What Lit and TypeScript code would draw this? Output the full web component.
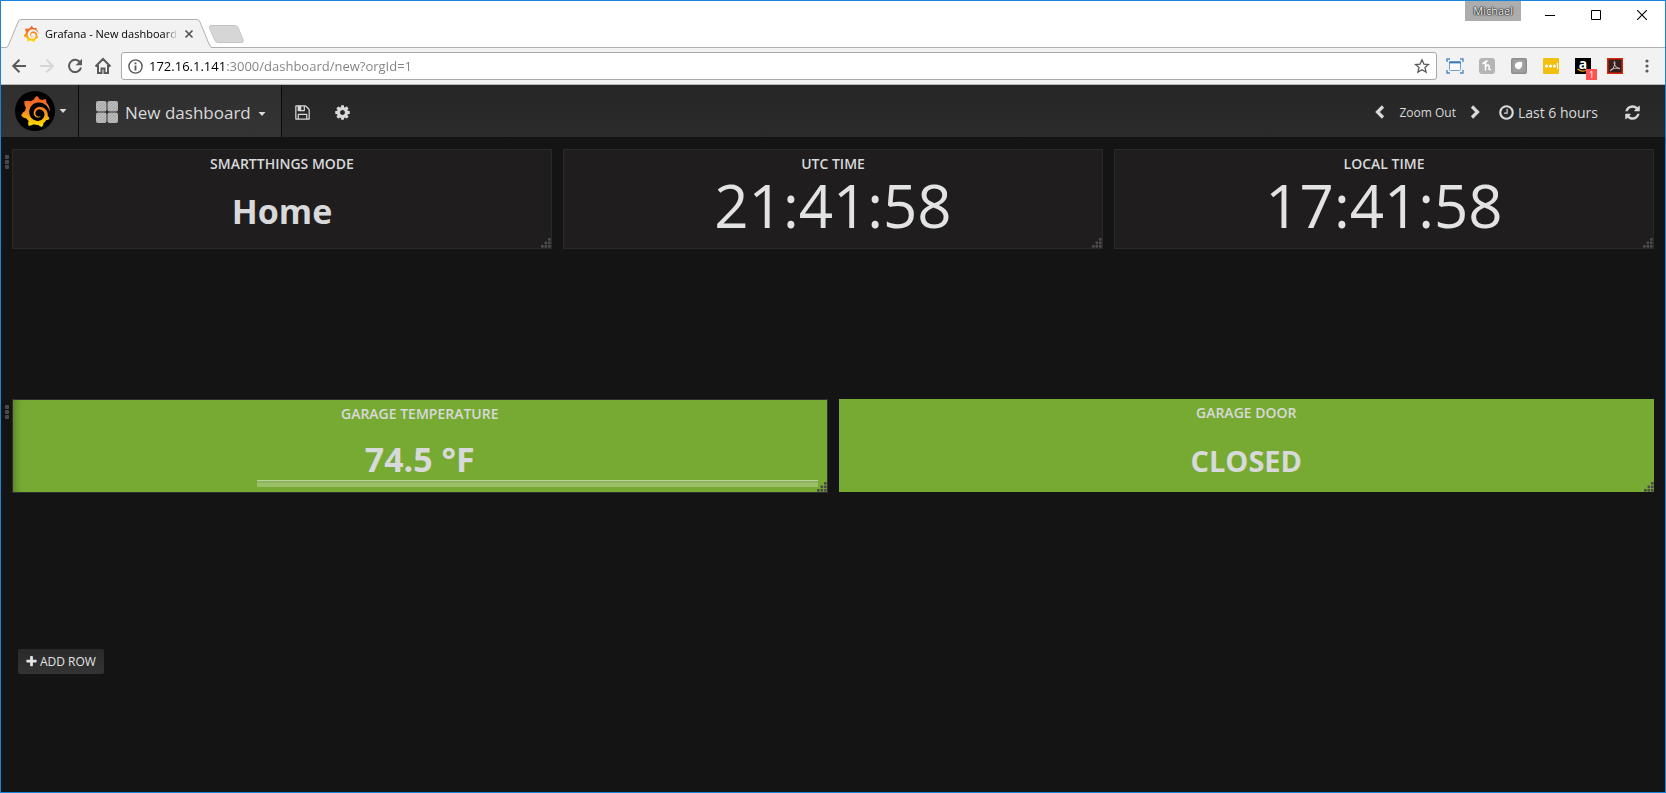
import { LitElement, html, svg, css, nothing } from "lit";
import { customElement, property } from "lit/decorators.js";
import { classMap } from "lit/directives/class-map.js";

const GRAFANA =
  "M23.02 10.59a8.578 8.578 0 0 0-.862-3.034 8.911 8.911 0 0 0-1.789-2.445c.337-1.342-.413-2.505-.413-2.505-1.292-.08-2.113.4-2.416.62-.052-.02-.102-.044-.154-.064-.22-.089-.446-.172-.677-.247-.231-.073-.47-.14-.711-.197a9.867 9.867 0 0 0-.875-.161C14.557.753 12.94 0 12.94 0c-1.804 1.145-2.147 2.744-2.147 2.744l-.018.093c-.098.029-.2.057-.298.088-.138.042-.275.094-.413.143-.138.055-.275.107-.41.166a8.869 8.869 0 0 0-1.557.87l-.063-.029c-2.497-.955-4.716.195-4.716.195-.203 2.658.996 4.33 1.235 4.636a11.608 11.608 0 0 0-.607 2.635C1.636 12.677.953 15.014.953 15.014c1.926 2.214 4.171 2.351 4.171 2.351.003-.002.006-.002.006-.005.285.509.615.994.986 1.446.156.19.32.371.488.548-.704 2.009.099 3.68.099 3.68 2.144.08 3.553-.937 3.849-1.173a9.784 9.784 0 0 0 3.164.501h.08l.055-.003.107-.002.103-.005.003.002c1.01 1.44 2.788 1.646 2.788 1.646 1.264-1.332 1.337-2.653 1.337-2.94v-.058c0-.02-.003-.039-.003-.06.265-.187.52-.387.758-.6a7.875 7.875 0 0 0 1.415-1.7c1.43.083 2.437-.885 2.437-.885-.236-1.49-1.085-2.216-1.264-2.354l-.018-.013-.016-.013a.217.217 0 0 1-.031-.02c.008-.092.016-.18.02-.27.011-.162.016-.323.016-.48v-.253l-.005-.098-.008-.135a1.891 1.891 0 0 0-.01-.13c-.003-.042-.008-.083-.013-.125l-.016-.124-.018-.122a6.215 6.215 0 0 0-2.032-3.73 6.015 6.015 0 0 0-3.222-1.46 6.292 6.292 0 0 0-.85-.048l-.107.002h-.063l-.044.003-.104.008a4.777 4.777 0 0 0-3.335 1.695c-.332.4-.592.84-.768 1.297a4.594 4.594 0 0 0-.312 1.817l.003.091c.005.055.007.11.013.164a3.615 3.615 0 0 0 .698 1.82 3.53 3.53 0 0 0 1.827 1.282c.33.098.66.14.971.137.039 0 .078 0 .114-.002l.063-.003c.02 0 .041-.003.062-.003.034-.002.065-.007.099-.01.007 0 .018-.003.028-.003l.031-.005.06-.008a1.18 1.18 0 0 0 .112-.02c.036-.008.072-.013.109-.024a2.634 2.634 0 0 0 .914-.415c.028-.02.056-.041.085-.065a.248.248 0 0 0 .039-.35.244.244 0 0 0-.309-.06l-.078.042c-.09.044-.184.083-.283.116a2.476 2.476 0 0 1-.475.096c-.028.003-.054.006-.083.006l-.083.002c-.026 0-.054 0-.08-.002l-.102-.006h-.012l-.024.006c-.016-.003-.031-.003-.044-.006-.031-.002-.06-.007-.091-.01a2.59 2.59 0 0 1-.724-.213 2.557 2.557 0 0 1-.667-.438 2.52 2.52 0 0 1-.805-1.475 2.306 2.306 0 0 1-.029-.444l.006-.122v-.023l.002-.031c.003-.021.003-.04.005-.06a3.163 3.163 0 0 1 1.352-2.29 3.12 3.12 0 0 1 .937-.43 2.946 2.946 0 0 1 .776-.101h.06l.07.002.045.003h.026l.07.005a4.041 4.041 0 0 1 1.635.49 3.94 3.94 0 0 1 1.602 1.662 3.77 3.77 0 0 1 .397 1.414l.005.076.003.075c.002.026.002.05.002.075 0 .024.003.052 0 .07v.065l-.002.073-.008.174a6.195 6.195 0 0 1-.08.639 5.1 5.1 0 0 1-.267.927 5.31 5.31 0 0 1-.624 1.13 5.052 5.052 0 0 1-3.237 2.014 4.82 4.82 0 0 1-.649.066l-.039.003h-.287a6.607 6.607 0 0 1-1.716-.265 6.776 6.776 0 0 1-3.4-2.274 6.75 6.75 0 0 1-.746-1.15 6.616 6.616 0 0 1-.714-2.596l-.005-.083-.002-.02v-.056l-.003-.073v-.096l-.003-.104v-.07l.003-.163c.008-.22.026-.45.054-.678a8.707 8.707 0 0 1 .28-1.355c.128-.444.286-.872.473-1.277a7.04 7.04 0 0 1 1.456-2.1 5.925 5.925 0 0 1 .953-.763c.169-.111.343-.213.524-.306.089-.05.182-.091.273-.135.047-.02.093-.042.138-.062a7.177 7.177 0 0 1 .714-.267l.145-.045c.049-.015.098-.026.148-.041.098-.029.197-.052.296-.076.049-.013.1-.02.15-.033l.15-.032.151-.028.076-.013.075-.01.153-.024c.057-.01.114-.013.171-.023l.169-.021c.036-.003.073-.008.106-.01l.073-.008.036-.003.042-.002c.057-.003.114-.008.171-.01l.086-.006h.023l.037-.003.145-.007a7.999 7.999 0 0 1 1.708.125 7.917 7.917 0 0 1 2.048.68 8.253 8.253 0 0 1 1.672 1.09l.09.077.089.078c.06.052.114.107.171.159.057.052.112.106.166.16.052.055.107.107.159.164a8.671 8.671 0 0 1 1.41 1.978c.012.026.028.052.04.078l.04.078.075.156c.023.051.05.1.07.153l.065.15a8.848 8.848 0 0 1 .45 1.34.19.19 0 0 0 .201.142.186.186 0 0 0 .172-.184c.01-.246.002-.532-.024-.856z";

const COG =
  "M1152 896q0-106-75-181t-181-75-181 75-75 181 75 181 181 75 181-75 75-181zm512-109v222q0 12-8 23t-20 13l-185 28q-19 54-39 91 35 50 107 138 10 12 10 25t-9 23q-27 37-99 108t-94 71q-12 0-26-9l-138-108q-44 23-91 38-16 136-29 186-7 28-36 28h-222q-14 0-24.5-8.5t-11.5-21.5l-28-184q-49-16-90-37l-141 107q-10 9-25 9-14 0-25-11-126-114-165-168-7-10-7-23 0-12 8-23 15-21 51-66.5t54-70.5q-27-50-41-99l-183-27q-13-2-21-12.5t-8-23.5v-222q0-12 8-23t19-13l186-28q14-46 39-92-40-57-107-138-10-12-10-24 0-10 9-23 26-36 98.5-107.5t94.5-71.5q13 0 26 10l138 107q44-23 91-38 16-136 29-186 7-28 36-28h222q14 0 24.5 8.5t11.5 21.5l28 184q49 16 90 37l142-107q9-9 24-9 13 0 25 10 129 119 165 170 7 8 7 22 0 12-8 23-15 21-51 66.5t-54 70.5q26 50 41 98l183 28q13 2 21 12.5t8 23.5z";
const FLOPPY =
  "M512 1536h768v-384h-768v384zm896 0h128v-896q0-14-10-38.5t-20-34.5l-281-281q-10-10-34-20t-39-10v416q0 40-28 68t-68 28h-576q-40 0-68-28t-28-68v-416h-128v1280h128v-416q0-40 28-68t68-28h832q40 0 68 28t28 68v416zm-384-928v-320q0-13-9.5-22.5t-22.5-9.5h-192q-13 0-22.5 9.5t-9.5 22.5v320q0 13 9.5 22.5t22.5 9.5h192q13 0 22.5-9.5t9.5-22.5zm640 32v928q0 40-28 68t-68 28h-1344q-40 0-68-28t-28-68v-1344q0-40 28-68t68-28h928q40 0 88 20t76 48l280 280q28 28 48 76t20 88z";
const CLOCK =
  "M1024 544v448q0 14-9 23t-23 9h-320q-14 0-23-9t-9-23v-64q0-14 9-23t23-9h224v-352q0-14 9-23t23-9h64q14 0 23 9t9 23zm416 352q0-148-73-273t-198-198-273-73-273 73-198 198-73 273 73 273 198 198 273 73 273-73 198-198 73-273zm224 0q0 209-103 385.5t-279.5 279.5-385.5 103-385.5-103-279.5-279.5-103-385.5 103-385.5 279.5-279.5 385.5-103 385.5 103 279.5 279.5 103 385.5z";
const REFRESH =
  "M1639 1056q0 5-1 7-64 268-268 434.5t-478 166.5q-146 0-282.5-55t-243.5-157l-129 129q-19 19-45 19t-45-19-19-45v-448q0-26 19-45t45-19h448q26 0 45 19t19 45-19 45l-137 137q71 66 161 102t187 36q134 0 250-65t186-179q11-17 53-117 8-23 30-23h192q13 0 22.5 9.5t9.5 22.5zm25-800v448q0 26-19 45t-45 19h-448q-26 0-45-19t-19-45 19-45l138-138q-148-137-349-137-134 0-250 65t-186 179q-11 17-53 117-8 23-30 23h-199q-13 0-22.5-9.5t-9.5-22.5v-7q65-268 270-434.5t480-166.5q146 0 284 55.5t245 156.5l130-129q19-19 45-19t45 19 19 45z";
const PLUS =
  "M1600 736v192q0 40-28 68t-68 28h-416v416q0 40-28 68t-68 28h-192q-40 0-68-28t-28-68v-416h-416q-40 0-68-28t-28-68v-192q0-40 28-68t68-28h416v-416q0-40 28-68t68-28h192q40 0 68 28t28 68v416h416q40 0 68 28t28 68z";

const fa = (d: string, size: number) => html`
  <svg width=${size} height=${size} viewBox="0 0 1792 1792" fill="currentColor" aria-hidden="true"><path d=${d}></path></svg>
`;

const grafana = (size: number) => html`
  <svg width=${size} height=${size} viewBox="0 0 24 24" aria-hidden="true">
    <defs>
      <linearGradient id="sun" x1="0" y1="0" x2="0" y2="1">
        <stop offset="0" stop-color="#f05a28"></stop>
        <stop offset="0.45" stop-color="#f58220"></stop>
        <stop offset="1" stop-color="#ffe600"></stop>
      </linearGradient>
    </defs>
    <path d=${GRAFANA} fill="url(#sun)"></path>
  </svg>
`;

const reset = css`
  *,
  *::before,
  *::after {
    box-sizing: border-box;
  }
  button,
  input {
    margin: 0;
    padding: 0;
    border: 0;
    background: none;
    font: inherit;
    color: inherit;
  }
  svg {
    display: block;
    flex: none;
  }
`;

@customElement("browser-chrome")
class BrowserChrome extends LitElement {
  static styles = [
    reset,
    css`
      :host {
        display: block;
        font-family: "Open Sans", "Noto Sans", sans-serif;
        color: #000;
      }
      .strip {
        display: flex;
        justify-content: space-between;
        height: 47px;
        background: #fff;
        border-bottom: 1px solid #b0b0b0;
      }
      .tabs {
        display: flex;
        align-items: flex-end;
        padding-left: 5px;
      }
      .tab {
        position: relative;
        display: flex;
        align-items: center;
        gap: 6px;
        width: 206px;
        height: 29px;
        margin-bottom: -1px;
        padding: 0 18px 0 17px;
        font-size: 11px;
      }
      .shape {
        position: absolute;
        inset: 0;
      }
      .tab > .favicon,
      .tab > .name,
      .tab > .close {
        position: relative;
      }
      .name {
        flex: 1;
        white-space: nowrap;
        overflow: hidden;
        mask-image: linear-gradient(90deg, #000 90%, transparent);
      }
      .new-tab {
        margin: 0 0 4px -4px;
      }
      .window {
        display: flex;
        align-items: flex-start;
      }
      .user {
        height: 20px;
        margin-right: 6px;
        padding: 0 8px;
        background: #adadad;
        color: #fff;
        font-size: 11px;
        line-height: 20px;
        text-shadow: 0 0 1px #000, 0 0 1px #000, 0 0 2px #000;
      }
      .window button {
        display: grid;
        place-items: center;
        width: 46px;
        height: 28px;
      }
      .bar {
        display: flex;
        align-items: center;
        height: 37px;
        padding: 0 2px 0 4px;
        background: #f2f2f2;
        border-bottom: 1px solid #b6b6b6;
      }
      .nav {
        display: grid;
        place-items: center;
        width: 28px;
        height: 28px;
        color: #5a5a5a;
      }
      .nav.off {
        color: #d5d5d5;
      }
      .omnibox {
        flex: 1;
        display: flex;
        align-items: center;
        gap: 6px;
        height: 28px;
        margin: 0 2px 0 4px;
        padding: 0 6px;
        background: #fff;
        border: 1px solid #a9a9a9;
        border-radius: 3px;
      }
      .url {
        flex: 1;
        min-width: 0;
        height: 24px;
        outline: none;
        font-size: 13px;
        color: transparent;
        background: linear-gradient(90deg, #000 78px, #808080 78px);
        -webkit-background-clip: text;
        background-clip: text;
      }
      .ext {
        position: relative;
        display: grid;
        place-items: center;
        width: 32px;
        height: 28px;
      }
      .count {
        position: absolute;
        left: 19px;
        top: 17px;
        width: 11px;
        height: 11px;
        background: #ff5252;
        color: #fff;
        font-size: 9px;
        line-height: 11px;
        text-align: center;
      }
      .glyph {
        display: grid;
        place-items: center;
        width: 16px;
        height: 16px;
        color: #fff;
        font-size: 14px;
        font-weight: 700;
        line-height: 10px;
      }
      .amazon {
        background: #000;
        padding-bottom: 4px;
      }
      .swoosh {
        position: absolute;
        left: 10px;
        top: 16px;
      }
    `,
  ];

  render() {
    return html`
      <div class="strip">
        <div class="tabs">
          <div class="tab">
            <svg class="shape" width="206" height="29" viewBox="0 0 206 29" aria-hidden="true">
              <path d="M0 29 Q2 28 3 25 L12 3 Q13 0.5 15 0.5 H191 Q193 0.5 194 3 L203 25 Q204 28 206 29 Z" fill="#f2f2f2"></path>
              <path d="M0 28.5 Q2 28 3 25 L12 3 Q13 0.5 15 0.5 H191 Q193 0.5 194 3 L203 25 Q204 28 206 28.5" fill="none" stroke="#b0b0b0"></path>
            </svg>
            <span class="favicon">${grafana(16)}</span>
            <span class="name">Grafana - New dashboard</span>
            <button class="close" aria-label="Close tab">
              <svg width="10" height="10" viewBox="0 0 10 10"><path d="M1.5 1.5l7 7m0-7l-7 7" stroke="#555" stroke-width="1.7"></path></svg>
            </button>
          </div>
          <button class="new-tab" aria-label="New tab">
            <svg width="36" height="18" viewBox="0 0 36 18">
              <path d="M3 .5h24q2 0 3 2l5 12q1 2.500-1 3H10q-2 0-3-2L1.500 3Q.5.5 3 .5z" fill="#d6d6d6" stroke="#c4c4c4"></path>
            </svg>
          </button>
        </div>
        <div class="window">
          <span class="user">Michael</span>
          <button aria-label="Minimize"><svg width="10" height="10"><path d="M0 5.500h10" stroke="#000"></path></svg></button>
          <button aria-label="Maximize"><svg width="10" height="10"><path d="M.5.5h9v9h-9z" fill="none" stroke="#000"></path></svg></button>
          <button aria-label="Close"><svg width="10" height="10"><path d="M0 0l10 10M10 0L0 10" stroke="#000" stroke-width="1.100"></path></svg></button>
        </div>
      </div>
      <div class="bar">
        <button class="nav" aria-label="Back">
          <svg width="16" height="16" viewBox="0 0 16 16" fill="none" stroke="currentColor" stroke-width="2"><path d="M15 8H2.500M8.500 1.700L2.200 8l6.300 6.300"></path></svg>
        </button>
        <button class="nav off" aria-label="Forward">
          <svg width="16" height="16" viewBox="0 0 16 16" fill="none" stroke="currentColor" stroke-width="2"><path d="M1 8h12.500M7.500 1.700L13.800 8l-6.300 6.300"></path></svg>
        </button>
        <button class="nav" aria-label="Reload">
          <svg width="16" height="16" viewBox="0 0 16 16"><path d="M13.200 4.600A6.100 6.100 0 1 0 14 9.500" fill="none" stroke="currentColor" stroke-width="2"></path><path d="M15 .8v6.400H8.600z" fill="currentColor"></path></svg>
        </button>
        <button class="nav" aria-label="Home">
          <svg width="18" height="18" viewBox="0 0 18 18" fill="none" stroke="currentColor" stroke-width="2"><path d="M1.500 9.500L9 2l7.500 7.500M4 8v8h3.500v-4.500h3V16H14V8"></path></svg>
        </button>
        <div class="omnibox">
          <svg width="15" height="15" viewBox="0 0 15 15"><circle cx="7.500" cy="7.500" r="6.600" fill="none" stroke="#555" stroke-width="1.400"></circle><path d="M7.500 3.400v1.800M7.500 6.400v5.200" stroke="#555" stroke-width="1.800"></path></svg>
          <input class="url" aria-label="Address" .value=${"172.16.1.141:3000/dashboard/new?orgId=1"} />
          <svg width="16" height="16" viewBox="0 0 16 16"><path d="M8 1.800l1.900 4.300 4.600.4-3.500 3 1.100 4.600L8 11.700l-4.100 2.400L5 9.500l-3.500-3 4.600-.4z" fill="none" stroke="#5a5a5a" stroke-width="1.300"></path></svg>
        </div>
        <button class="ext" aria-label="Screen capture">
          <svg width="18" height="16" viewBox="0 0 18 16">
            <path d="M1 4V1h3M14 1h3v3M17 12v3h-3M4 15H1v-3" fill="none" stroke="#4c8cc4" stroke-width="1.400"></path>
            <rect x="3.500" y="3.500" width="11" height="9" rx="1" fill="#fafafa" stroke="#6ea3cf"></rect>
            <path d="M3 4.500h12" stroke="#3f7db8" stroke-width="1.800"></path>
          </svg>
        </button>
        <button class="ext" aria-label="Shopping helper">
          <svg width="16" height="16" viewBox="0 0 16 16">
            <rect width="16" height="16" rx="3" fill="#b5b5b5"></rect>
            <path d="M4 5.500L8 3M6.500 3.500V12M6.500 9q1.500-2.500 3.200-1.700 1 .7.300 3.200-.2 1.500 1.500 1" fill="none" stroke="#fff" stroke-width="1.500" stroke-linecap="round"></path>
          </svg>
        </button>
        <button class="ext" aria-label="Tag helper">
          <svg width="16" height="16" viewBox="0 0 16 16">
            <rect width="16" height="16" rx="2" fill="#8e8e8e"></rect><rect x="1.500" y="1.500" width="13" height="13" rx="1" fill="#9f9f9f"></rect>
            <path d="M5 5q3-2 6-1 1 4-2 7-3 1-5-2-.5-3 1-4z" fill="#fff"></path>
          </svg>
        </button>
        <button class="ext" aria-label="Password manager">
          <svg width="16" height="16" viewBox="0 0 16 16">
            <rect width="16" height="16" rx="1" fill="#f2c011"></rect>
            <circle cx="3.500" cy="8" r="1.500" fill="#fff"></circle><circle cx="7.500" cy="8" r="1.500" fill="#fff"></circle><circle cx="11.500" cy="8" r="1.500" fill="#fff"></circle>
            <path d="M14.500 5v6" stroke="#fff"></path>
          </svg>
        </button>
        <button class="ext" aria-label="Amazon assistant">
          <span class="glyph amazon">a</span>
          <svg class="swoosh" width="12" height="5" viewBox="0 0 12 5"><path d="M.5 1q5 4 10 .5" fill="none" stroke="#f79a1c" stroke-width="1.300"></path></svg>
          <span class="count">1</span>
        </button>
        <button class="ext" aria-label="Acrobat">
          <svg width="16" height="16" viewBox="0 0 16 16">
            <rect x=".75" y=".75" width="14.500" height="14.500" fill="#33201f" stroke="#dc2408" stroke-width="1.500"></rect>
            <path d="M3.500 12.800q3.200-2 4.300-6.300.6-3-.3-3-.9.200-.2 2.700 1.200 3.300 5.200 4.800.8-.9-1.500-1-4 .2-7 1.500-1.200.8-.5 1.300z" fill="none" stroke="#d8cccc" stroke-width=".9"></path>
          </svg>
        </button>
        <button class="ext" aria-label="Menu">
          <svg width="4" height="14" viewBox="0 0 4 14" fill="#5a5a5a"><circle cx="2" cy="2" r="1.600"></circle><circle cx="2" cy="7" r="1.600"></circle><circle cx="2" cy="12" r="1.600"></circle></svg>
        </button>
      </div>
    `;
  }
}

@customElement("dash-panel")
class DashPanel extends LitElement {
  @property() heading = "";
  @property() value = "";
  @property() kind = "stat";
  @property({ type: Boolean }) spark = false;

  static styles = [
    reset,
    css`
      :host {
        display: block;
        flex: 1;
        min-width: 0;
      }
      .panel {
        position: relative;
        display: flex;
        flex-direction: column;
        height: 100px;
        background: #1f1d1d;
        border: 1px solid #292929;
        color: #d8d9da;
        text-align: center;
      }
      .heading {
        margin: 0;
        padding-top: 4px;
        font-size: 14px;
        font-weight: 600;
        line-height: 20px;
      }
      .body {
        flex: 1;
        display: grid;
        place-items: center;
        font-weight: 700;
        font-size: 34px;
        line-height: 40px;
      }
      .clock .body {
        font-weight: 400;
        font-size: 60px;
        line-height: 60px;
        color: #e3e3e3;
        padding-bottom: 12px;
      }
      .green {
        background: #77aa33;
        height: 93px;
        border: 0;
      }
      .green .body {
        font-size: 29px;
        padding-top: 6px;
      }
      .gauge {
        height: 94px;
        border: 1px solid #303030;
        box-shadow: inset 9px 0 8px -8px rgba(0, 0, 0, 0.35);
      }
      .gauge .body {
        font-size: 34px;
        padding-top: 14px;
      }
      .spark {
        height: 7px;
        margin: 0 9px 5px 30%;
        border-top: 1px solid #b9d396;
        background: linear-gradient(#8fb35f 2px, #9ac069 2px);
      }
      .grip {
        position: absolute;
        right: 0;
        bottom: 0;
        color: #4b4b4b;
      }
    `,
  ];

  render() {
    const dots = [[7, 0], [3.5, 3.5], [7, 3.5], [0, 7], [3.5, 7], [7, 7]];
    return html`
      <section
        class=${classMap({
          panel: true,
          clock: this.kind === "clock",
          green: this.kind === "alert",
          gauge: this.spark,
        })}
      >
        <h2 class="heading">${this.heading}</h2>
        <div class="body">${this.value}</div>
        ${this.spark ? html`<div class="spark"></div>` : nothing}
        <svg class="grip" width="10" height="10" viewBox="0 0 10 10" fill="currentColor" aria-hidden="true">
          ${dots.map(([x, y]) => svg`<rect x=${x} y=${y} width="2.700" height="2.700" rx="0.600"></rect>`)}
        </svg>
      </section>
    `;
  }
}

const ROWS = [
  [
    { heading: "SMARTTHINGS MODE", value: "Home", kind: "stat", spark: false },
    { heading: "UTC TIME", value: "21:41:58", kind: "clock", spark: false },
    { heading: "LOCAL TIME", value: "17:41:58", kind: "clock", spark: false },
  ],
  [
    { heading: "GARAGE TEMPERATURE", value: "74.5 °F", kind: "alert", spark: true },
    { heading: "GARAGE DOOR", value: "CLOSED", kind: "alert", spark: false },
  ],
];

@customElement("app-root")
class AppRoot extends LitElement {
  static styles = [
    reset,
    css`
      :host {
        display: flex;
        flex-direction: column;
        box-sizing: border-box;
        min-height: 100vh;
        border: 1px solid #1883d7;
        background: #141414;
        color: #d8d9da;
        font-family: "Open Sans", "Noto Sans", sans-serif;
      }
      .navbar {
        display: flex;
        height: 52px;
        background: linear-gradient(#262626, #2b2b2b);
      }
      .navbar button {
        display: flex;
        align-items: center;
        padding-top: 2px;
      }
      .navbar .brand,
      .navbar .picker {
        background: linear-gradient(#2f2f2f, #343434);
        border-right: 1px solid #0a0a0a;
      }
      .navbar .brand {
        gap: 4px;
        width: 78px;
        padding: 0 0 0 14px;
      }
      .disc {
        display: grid;
        place-items: center;
        width: 40px;
        height: 40px;
        border-radius: 50%;
        background: #000;
      }
      .navbar .picker {
        gap: 7px;
        width: 203px;
        padding-left: 17px;
        font-size: 17px;
      }
      .picker .caret {
        margin-top: 4px;
      }
      .navbar .tool {
        justify-content: center;
        width: 40px;
      }
      .time {
        display: flex;
        margin-left: auto;
        padding-right: 13px;
      }
      .navbar .step {
        justify-content: center;
        width: 24px;
      }
      .navbar .zoom {
        padding-left: 7px;
        padding-right: 7px;
        font-size: 12px;
      }
      .navbar .range {
        gap: 3px;
        margin-left: 11px;
        font-size: 14px;
      }
      .navbar .refresh {
        justify-content: center;
        width: 40px;
        margin-left: 14px;
      }
      .rows {
        padding: 12px 11px 0 0;
      }
      .row {
        display: grid;
        grid-template-columns: 11px 1fr;
        min-height: 250px;
      }
      .handle {
        width: 11px;
        height: 26px;
        color: #4a4a4a;
      }
      .handle svg {
        margin-left: 4px;
      }
      .panels {
        display: flex;
        align-items: flex-start;
        gap: 11px;
      }
      .add {
        display: flex;
        align-items: center;
        gap: 2px;
        height: 25px;
        margin-left: 17px;
        padding: 0 8px 0 7px;
        border-radius: 2px;
        background: linear-gradient(#2a2a2a, #333);
        font-size: 12px;
        color: #e3e3e3;
      }
    `,
  ];

  render() {
    return html`
      <browser-chrome></browser-chrome>
      <nav class="navbar">
        <button class="brand" aria-label="Main menu">
          <span class="disc">${grafana(31)}</span>
          <svg width="8" height="4" viewBox="0 0 8 4" fill="currentColor"><path d="M.5 0h7L4 4z"></path></svg>
        </button>
        <button class="picker">
          <svg width="22" height="22" viewBox="0 0 22 22" aria-hidden="true">
            <defs>
              <pattern id="hatch" width="2" height="2" patternUnits="userSpaceOnUse" patternTransform="rotate(45)">
                <rect width="2" height="2" fill="#c4c4c4"></rect><rect width=".8" height="2" fill="#9a9a9a"></rect>
              </pattern>
            </defs>
            ${[[0, 0], [11.5, 0], [0, 11.5], [11.5, 11.5]].map(
              ([x, y]) => svg`<rect x=${x} y=${y} width="10.500" height="10.500" rx="2" fill="url(#hatch)"></rect>`,
            )}
          </svg>
          <span>New dashboard</span>
          <svg class="caret" width="8" height="4" viewBox="0 0 8 4" fill="currentColor"><path d="M.5 0h7L4 4z"></path></svg>
        </button>
        <button class="tool" aria-label="Save dashboard">${fa(FLOPPY, 17)}</button>
        <button class="tool" aria-label="Settings">${fa(COG, 17)}</button>
        <div class="time">
          <button class="step" aria-label="Shift back">
            <svg width="10" height="14" viewBox="0 0 10 14"><path d="M8 1.500L2.500 7 8 12.500" fill="none" stroke="currentColor" stroke-width="3.200"></path></svg>
          </button>
          <button class="zoom">Zoom Out</button>
          <button class="step" aria-label="Shift forward">
            <svg width="10" height="14" viewBox="0 0 10 14"><path d="M2 1.500L7.500 7 2 12.500" fill="none" stroke="currentColor" stroke-width="3.200"></path></svg>
          </button>
          <button class="range">${fa(CLOCK, 17)}<span>Last 6 hours</span></button>
          <button class="refresh" aria-label="Refresh">${fa(REFRESH, 17)}</button>
        </div>
      </nav>
      <main class="rows">
        ${ROWS.map(
          (panels) => html`
            <div class="row">
              <button class="handle" aria-label="Row menu">
                <svg width="4" height="14" viewBox="0 0 4 14" fill="currentColor">
                  <rect width="4" height="4" rx="1"></rect><rect y="5" width="4" height="4" rx="1"></rect><rect y="10" width="4" height="4" rx="1"></rect>
                </svg>
              </button>
              <div class="panels">
                ${panels.map(
                  (p) => html`<dash-panel .heading=${p.heading} .value=${p.value} .kind=${p.kind} .spark=${p.spark}></dash-panel>`,
                )}
              </div>
            </div>
          `,
        )}
        <button class="add">${fa(PLUS, 13)}<span>ADD ROW</span></button>
      </main>
    `;
  }
}
